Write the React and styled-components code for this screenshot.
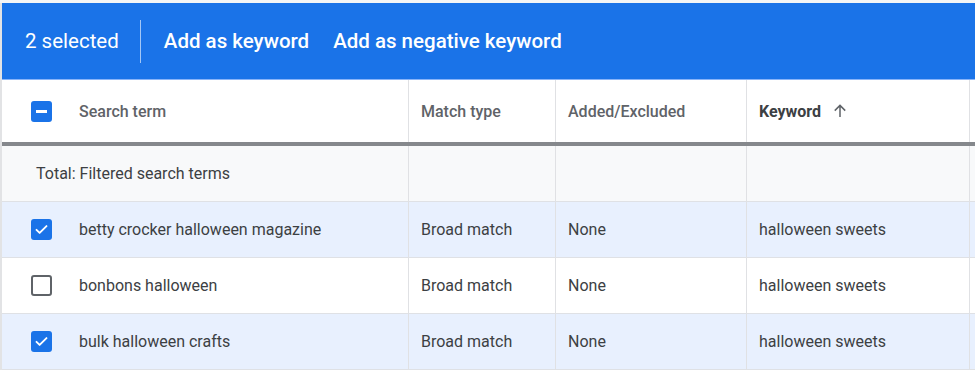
import React from 'react'
import styled, { createGlobalStyle } from 'styled-components'

const GlobalStyle = createGlobalStyle`
    body {
        margin: 0;
        background: #ffffff;
        font-family: Roboto, "Liberation Sans", sans-serif;
    }
`

const COLS = '407px 147px 191px 223px 1fr'

const rows = [
    { term: 'betty crocker halloween magazine', checked: true },
    { term: 'bonbons halloween', checked: false },
    { term: 'bulk halloween crafts', checked: true },
]

function CheckIcon() {
    return (
        <svg width="15" height="15" viewBox="0 0 24 24">
            <path d="M4 12.5l5 5L20 6.5" fill="none" stroke="#fff" strokeWidth="3" strokeLinecap="round" strokeLinejoin="round" />
        </svg>
    )
}

function ArrowUp() {
    return (
        <svg width="18" height="18" viewBox="0 0 24 24">
            <path d="M12 20V5M5 11.5L12 4.5l7 7" fill="none" stroke="#5f6368" strokeWidth="2" />
        </svg>
    )
}

function App() {
    return (
        <>
            <GlobalStyle />
            <Page>
                <TopStrip />
                <Frame>
                    <ActionBar>
                        <Selected>2 selected</Selected>
                        <Divider />
                        <BarAction>Add as keyword</BarAction>
                        <BarAction>Add as negative keyword</BarAction>
                    </ActionBar>
                    <HeadRow>
                        <Cell $first>
                            <Box $checked><Dash /></Box>
                            <HeadText>Search term</HeadText>
                        </Cell>
                        <Cell><HeadText>Match type</HeadText></Cell>
                        <Cell><HeadText>Added/Excluded</HeadText></Cell>
                        <Cell>
                            <HeadText $sorted>Keyword</HeadText>
                            <ArrowUp />
                        </Cell>
                        <Cell $last />
                    </HeadRow>
                    <Row $tone="total">
                        <Cell><TotalText>Total: Filtered search terms</TotalText></Cell>
                        <Cell />
                        <Cell />
                        <Cell />
                        <Cell $last />
                    </Row>
                    {rows.map((r) => (
                        <Row key={r.term} $tone={r.checked ? 'selected' : 'plain'}>
                            <Cell $first>
                                <Box $checked={r.checked}>{r.checked && <CheckIcon />}</Box>
                                <BodyText>{r.term}</BodyText>
                            </Cell>
                            <Cell><BodyText>Broad match</BodyText></Cell>
                            <Cell><BodyText>None</BodyText></Cell>
                            <Cell><BodyText>halloween sweets</BodyText></Cell>
                            <Cell $last />
                        </Row>
                    ))}
                </Frame>
            </Page>
        </>
    )
}

const Page = styled.div`
    width: 975px;
    height: 371px;
    overflow: hidden;
`

const TopStrip = styled.div`
    height: 3px;
    background: #f4f5f6;
`

const Frame = styled.div`
    border-left: 2px solid #e2e3e5;
`

const ActionBar = styled.div`
    height: 76px;
    background: #1a73e8;
    border-bottom: 1px solid #8ab4f8;
    display: flex;
    align-items: center;
    padding-left: 23px;
    color: #ffffff;
    font-family: Roboto, "Liberation Sans", sans-serif;
    font-size: 20.5px;
`

const Selected = styled.span`
    font-weight: 400;
`

const Divider = styled.div`
    width: 1px;
    height: 43px;
    background: rgba(255, 255, 255, 0.6);
    margin: 0 23px 0 21px;
`

const BarAction = styled.span`
    font-weight: 500;
    margin-right: 24px;
`

const HeadRow = styled.div`
    display: grid;
    grid-template-columns: ${COLS};
    height: 66px;
    border-bottom: 4px solid #85888c;
    box-sizing: border-box;
    background: #ffffff;
`

const Row = styled.div`
    display: grid;
    grid-template-columns: ${COLS};
    height: 56px;
    box-sizing: border-box;
    border-bottom: 1px solid #dfe1e5;
    background: ${(p) =>
        p.$tone === 'selected' ? '#e8f0fe' : p.$tone === 'total' ? '#f8f9fa' : '#ffffff'};
`

const Cell = styled.div`
    display: flex;
    align-items: center;
    gap: 10px;
    padding-left: ${(p) => (p.$first ? '29px' : '12px')};
    border-right: ${(p) => (p.$last ? 'none' : '1px solid #e0e1e4')};
    box-sizing: border-box;
    min-width: 0;
`

const Box = styled.div`
    width: 21px;
    height: 21px;
    flex: none;
    box-sizing: border-box;
    border-radius: 3px;
    margin-right: 17px;
    display: flex;
    align-items: center;
    justify-content: center;
    background: ${(p) => (p.$checked ? '#1a73e8' : '#ffffff')};
    border: ${(p) => (p.$checked ? 'none' : '2px solid #5f6368')};
`

const Dash = styled.div`
    width: 11px;
    height: 3px;
    background: #ffffff;
`

const HeadText = styled.span`
    font-size: 16px;
    font-weight: ${(p) => (p.$sorted ? 700 : 500)};
    color: ${(p) => (p.$sorted ? '#3c4043' : '#5f6368')};
`

const TotalText = styled.span`
    font-size: 16px;
    color: #3c4043;
    margin-left: 22px;
`

const BodyText = styled.span`
    font-size: 16px;
    color: #3c4043;
    white-space: nowrap;
`

export default App
